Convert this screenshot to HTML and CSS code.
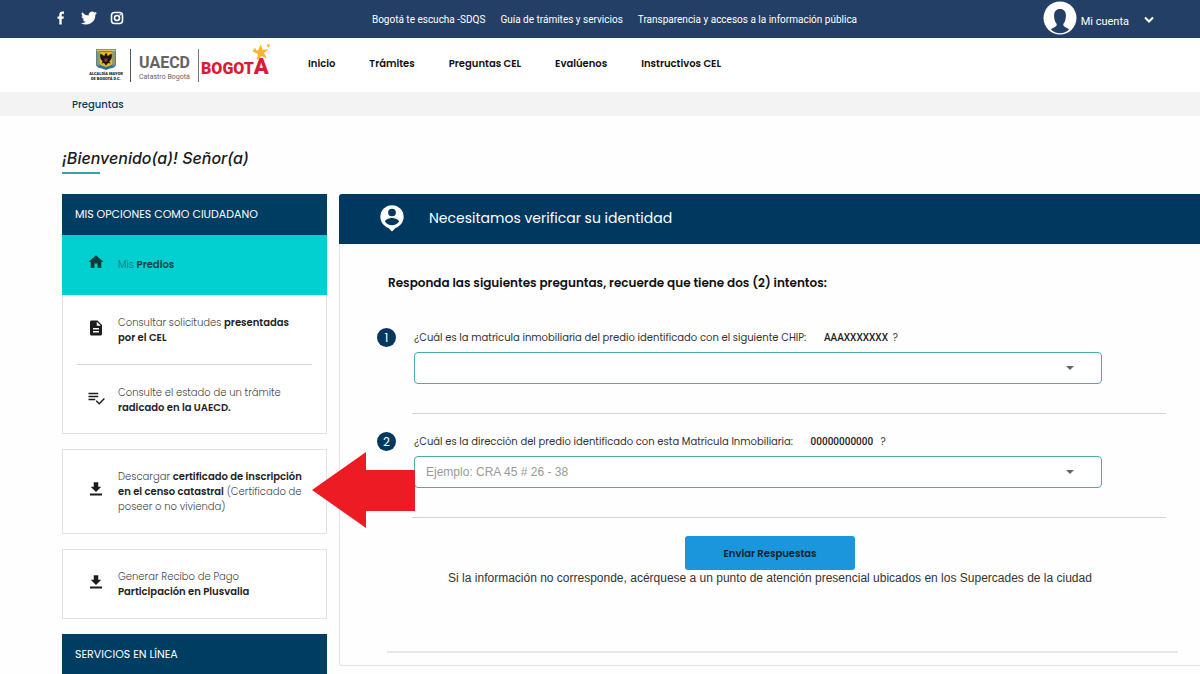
FILE: index.html
```html
<!DOCTYPE html>
<html lang="es">
<head>
<meta charset="utf-8">
<meta name="viewport" content="width=device-width, initial-scale=1">
<title>Catastro en Línea - Preguntas</title>
<link rel="stylesheet" href="styles.css">
</head>
<body>
<header>
  <div class="topbar">
    <div class="social">
      <a href="#" aria-label="Facebook"><svg width="14" height="14" viewBox="0 0 14 14"><path d="M5.3 13.5V7.8H3.5V5.4h1.8V3.8C5.3 1.700 6.500.6 8.400.6c.8 0 1.600.1 1.600.1v2.100H8.900c-.9 0-1.200.5-1.200 1.100v1.500h2.200l-.4 2.400H7.700v5.700z" fill="#fff"/></svg></a>
      <a href="#" aria-label="Twitter"><svg width="16" height="16" viewBox="0 0 24 24"><path d="M23.950 4.600a10 10 0 0 1-2.800.8 5 5 0 0 0 2.100-2.700 10 10 0 0 1-3.100 1.200 4.900 4.900 0 0 0-8.400 4.500A14 14 0 0 1 1.700 3.200a4.900 4.900 0 0 0 1.500 6.500 5 5 0 0 1-2.200-.6 4.900 4.900 0 0 0 3.900 4.900 5 5 0 0 1-2.200.1 4.900 4.900 0 0 0 4.600 3.400A9.900 9.900 0 0 1 0 19.500 14 14 0 0 0 21.500 7.100a10 10 0 0 0 2.450-2.500z" fill="#fff"/></svg></a>
      <a href="#" aria-label="Instagram"><svg width="14" height="14" viewBox="0 0 14 14" fill="none" stroke="#fff" stroke-width="1.600"><rect x="1.500" y="1.500" width="11" height="11" rx="3"/><circle cx="7" cy="7" r="2.500"/><circle cx="10.200" cy="3.800" r=".8" fill="#fff" stroke="none"/></svg></a>
    </div>
    <nav class="toplinks" aria-label="Enlaces institucionales">
      <a href="#">Bogotá te escucha -SDQS</a>
      <a href="#">Guía de trámites y servicios</a>
      <a href="#">Transparencia y accesos a la información pública</a>
    </nav>
    <button class="account" type="button">
      <svg width="34" height="34" viewBox="0 0 34 34"><circle cx="17" cy="17" r="16.500" fill="#fff"/><path d="M17 8c-3.800 0-5.900 2.500-5.900 6.300 0 2.400.3 5 1.300 6.600.6.900 1.300 1.600 1.300 2.800 0 1.900-2.800 2.700-6 4.600 2.500 2.500 5.700 3.900 9.300 3.900s6.800-1.400 9.300-3.900c-3.200-1.900-6-2.700-6-4.600 0-1.200.7-1.900 1.300-2.800 1-1.600 1.300-4.200 1.300-6.600C22.900 10.500 20.800 8 17 8z" fill="#243f65"/></svg>
      <span>Mi cuenta</span>
      <svg class="chevron" width="10" height="8" viewBox="0 0 10 8"><path d="M1 1.500l4 4 4-4" fill="none" stroke="#fff" stroke-width="2"/></svg>
    </button>
  </div>
  <div class="mainbar">
    <a class="brand" href="#">
      <span class="crest">
        <svg width="22" height="23" viewBox="0 0 22 22"><path d="M1 .5h20v15c0 3-3 4-6 4.500l-4 1.500-4-1.500c-3-.5-6-1.500-6-4.500z" fill="#2f6f9d"/><path d="M1.500 2h3v16l-3-2zM17.500 2h3v14l-3 2z" fill="#c9b458" opacity=".6"/><path d="M4.500 3.500h13v11c0 2-3 3-6.500 4-3.500-1-6.500-2-6.500-4z" fill="#e6b62c"/><path d="M1.500 1h19v1.800h-19z" fill="#d8c46a"/><path d="M11 4l1 2 .8 1.500 3.700-2.500c1 3 .2 6-2.200 8l1.200 2-2.500-.6-2 2.600-2-2.600-2.500.6 1.200-2c-2.400-2-3.200-5-2.200-8l3.700 2.500L10 6z" fill="#171717"/><path d="M9.500 10h3v2.500l-1.500 1-1.500-1z" fill="#a73326"/></svg>
        <span>ALCALDÍA MAYOR<br>DE BOGOTÁ D.C.</span>
      </span>
      <span class="agency"><b>UAECD</b><span>Catastro Bogotá</span></span>
      <span class="city"><span>BOGOT<b>A</b></span>
        <svg class="star" width="24" height="21" viewBox="0 0 22 19" fill="#f5b52e"><path d="M11.500 2l1.900 4.900 5.300-.4-4 3.500 2.600 5-4.900-2.200-4.300 3.700 1-5.600L4 8.300l5.400-.9z"/><path d="M4.500 5.500l1.600.8 1.300-1.200-.3 1.700 1.500.8-1.700.3-.3 1.700-.8-1.500-1.700.2L5.300 7zM17 1.500l1.500.8L19.700 1l-.2 1.800 1.500.8-1.700.3-.3 1.600-.8-1.500-1.700.2 1.200-1.200z"/></svg>
      </span>
    </a>
    <nav class="menu" aria-label="Principal">
      <a href="#">Inicio</a><a href="#">Trámites</a><a href="#">Preguntas CEL</a><a href="#">Evalúenos</a><a href="#">Instructivos CEL</a>
    </nav>
  </div>
  <div class="crumbs"><a href="#">Preguntas</a></div>
</header>

<main class="page">
  <h1>¡Bienvenido(a)! Señor(a)</h1>
  <div class="columns">
    <aside class="side">
      <section class="group">
        <h2>MIS OPCIONES COMO CIUDADANO</h2>
        <a class="item active" href="#"><svg width="18" height="18" viewBox="0 0 24 24"><path d="M10 20v-6h4v6h5v-8h3L12 3 2 12h3v8z"/></svg><span>Mis <b>Predios</b></span></a>
        <a class="item" href="#"><svg width="18" height="18" viewBox="0 0 24 24"><path d="M14 2H6c-1.100 0-2 .9-2 2v16c0 1.100.9 2 2 2h12c1.100 0 2-.9 2-2V8zm2 16H8v-2h8zm0-4H8v-2h8zm-3-5V3.500L18.500 9z"/></svg><span>Consultar solicitudes <b>presentadas<br>por el CEL</b></span></a>
        <hr>
        <a class="item" href="#"><svg width="18" height="18" viewBox="0 0 24 24"><path d="M2 5h13v2H2zm0 4h13v2H2zm0 4h9v2H2zM22.500 12l-6.200 6.300L13 15l-1.400 1.400 4.700 4.600 7.600-7.600z"/></svg><span>Consulte el estado de un trámite<br><b>radicado en la UAECD.</b></span></a>
      </section>
      <section class="box">
        <a class="item" href="#"><svg width="18" height="18" viewBox="0 0 24 24"><path d="M19 9h-4V3H9v6H5l7 7zM4 18v2.500h16V18z"/></svg><span>Descargar <b>certificado de inscripción<br>en el censo catastral</b> (Certificado de<br>poseer o no vivienda)</span></a>
        <svg class="pointer" width="104" height="76" viewBox="0 0 104 76"><path d="M0 38L54 0v18h49v41H54v17z" fill="#ed1c24"/></svg>
      </section>
      <section class="box">
        <a class="item" href="#"><svg width="18" height="18" viewBox="0 0 24 24"><path d="M19 9h-4V3H9v6H5l7 7zM4 18v2.500h16V18z"/></svg><span>Generar Recibo de Pago<br><b>Participación en Plusvalia</b></span></a>
      </section>
      <section><h2>SERVICIOS EN LÍNEA</h2></section>
    </aside>

    <form class="card">
      <h2 class="card-head"><svg width="28" height="28" viewBox="0 0 24 24"><path d="M12 1a10 10 0 0 0-10 10c0 4.500 3 8.300 7 9.500L12 23.500l3-3c4-1.200 7-5 7-9.500A10 10 0 0 0 12 1zm0 3a3.300 3.300 0 1 1 0 6.600A3.300 3.300 0 0 1 12 4zm0 14.300a7.200 7.200 0 0 1-6-3.200c0-2 4-3.100 6-3.100s6 1.100 6 3.100a7.200 7.200 0 0 1-6 3.200z" fill="#fff"/></svg>Necesitamos verificar su identidad</h2>
      <div class="card-body">
        <h3>Responda las siguientes preguntas, recuerde que tiene dos (2) intentos:</h3>
        <div class="question">
          <span class="num">1</span>
          <div class="field">
            <label for="q1">¿Cuál es la matrícula inmobiliaria del predio identificado con el siguiente CHIP: <b>AAAXXXXXXX</b> ?</label>
            <div class="select"><select id="q1"><option></option></select><svg width="8" height="4" viewBox="0 0 8 4"><path d="M0 0h8L4 4z" fill="#666"/></svg></div>
          </div>
        </div>
        <div class="question">
          <span class="num">2</span>
          <div class="field">
            <label for="q2">¿Cuál es la dirección del predio identificado con esta Matrícula Inmobiliaria: <b>00000000000</b> &nbsp;?</label>
            <div class="select"><select id="q2"><option>Ejemplo: CRA 45 # 26 - 38</option></select><svg width="8" height="4" viewBox="0 0 8 4"><path d="M0 0h8L4 4z" fill="#666"/></svg></div>
          </div>
        </div>
        <div class="actions">
          <button type="submit">Enviar Respuestas</button>
          <p>Si la información no corresponde, acérquese a un punto de atención presencial ubicados en los Supercades de la ciudad</p>
        </div>
      </div>
    </form>
  </div>
</main>
</body>
</html>
```
FILE: styles.css
```css
* { box-sizing: border-box; }
body {
  margin: 0;
  background: #fefefe;
  color: #222;
  font-family: Poppins, Inter, "Open Sans", sans-serif;
  font-size: 10px;
  line-height: 15px;
  overflow-x: hidden;
}
a { color: inherit; text-decoration: none; }
button { font: inherit; border: 0; cursor: pointer; }
svg { display: block; flex: none; }
h1, h2, h3, p { margin: 0; font-weight: 400; }

.topbar {
  display: grid;
  grid-template-columns: 1fr auto 1fr;
  align-items: center;
  height: 38px;
  padding: 0 46px 2px 54px;
  background: #243f65;
  color: #fff;
  font-family: Roboto, "Liberation Sans", sans-serif;
}
.social { display: flex; align-items: center; gap: 13px; }
.toplinks { display: flex; gap: 15px; margin-left: 21px; padding-top: 2px; }
.account {
  display: flex;
  align-items: center;
  justify-self: end;
  gap: 4px;
  padding: 0;
  background: none;
  color: #fff;
  font-size: 11px;
}
.account span { padding-top: 6px; }
.chevron { margin-left: 11px; margin-top: 4px; }

.mainbar {
  display: flex;
  align-items: center;
  gap: 35px;
  height: 54px;
  padding-left: 89px;
  background: #fff;
}
.brand { display: flex; align-items: center; }
.crest {
  display: flex;
  flex-direction: column;
  align-items: center;
  width: 34px;
  padding-bottom: 2px;
  color: #222;
  font: 900 4px/5px Roboto, sans-serif;
  text-align: center;
  white-space: nowrap;
}
.agency {
  display: flex;
  flex-direction: column;
  margin-left: 7px;
  padding: 5px 7px 0 8px;
  width: 69px;
  height: 33px;
  border-left: 1px solid #555;
  border-right: 1px solid #777;
  color: #646464;
  font-family: Roboto, "Open Sans", sans-serif;
  font-size: 7px;
  line-height: 10px;
  white-space: nowrap;
}
.agency b { font-size: 16px; line-height: 18px; }
.city {
  position: relative;
  width: 74px;
  padding: 6px 0 0 2px;
  color: #d91c36;
  font: 900 16px/20px Roboto, sans-serif;
  white-space: nowrap;
}
.city b { font-size: 22px; font-weight: 900; }
.star { position: absolute; right: 1px; top: -9px; }
.menu { display: flex; gap: 34px; color: #111; font-weight: 600; padding-bottom: 4px; }

.crumbs {
  height: 24px;
  padding: 6px 72px;
  background: #f3f3f3;
  color: #003d63;
  line-height: 14px;
  font-weight: 500;
}

.page { padding-left: 62px; }
h1 {
  margin: 30px 0 20px;
  color: #1a1a1a;
  font: italic 500 16px/24px Inter, sans-serif;
}
h1::after {
  content: "";
  display: block;
  width: 38px;
  height: 2px;
  margin-top: 2px;
  background: #35a5a8;
}
.columns { display: flex; align-items: flex-start; gap: 12px; }

.side { display: flex; flex-direction: column; gap: 15px; flex: 0 0 265px; }
.side h2 {
  padding: 10px 13px 11px;
  background: #003d63;
  color: #fff;
  font-size: 11px;
  line-height: 20px;
}
.group, .box { border: 1px solid #e2e2e2; background: #fff; }
.group { border-top: 0; }
.group h2 { margin: 0 -1px; }
.group hr { height: 1px; margin: 0 14px; border: 0; background: #d8d8d8; }
.box { position: relative; }
.item {
  display: flex;
  align-items: center;
  gap: 13px;
  padding: 19px 0 19px 24px;
  color: #444;
  font-weight: 300;
  white-space: nowrap;
}
.item svg { margin-bottom: 5px; fill: #1c1c1c; }
.item b { color: #222; font-weight: 600; }
.group .item { padding: 20px 0 19px 24px; }
.group .item.active {
  height: 60px;
  margin: 0 -1px;
  padding: 0 0 2px 25px;
  background: #02cfcf;
  color: #14706f;
}
.active b { color: #0b4446; }
.item.active svg { fill: #0d3b3c; }
.group .item:last-child { padding-bottom: 18px; }
.pointer { position: absolute; left: 249px; top: 2px; z-index: 2; }

.card {
  flex: 1;
  min-width: 0;
  border: solid #e4e4e4;
  border-width: 0 0 1px 1px;
  border-radius: 3px 0 0 3px;
  background: #fefefe;
}
.card-head {
  display: flex;
  align-items: center;
  gap: 23px;
  height: 50px;
  padding: 0 39px 2px;
  margin-left: -1px;
  border-radius: 3px 0 0;
  background: #003860;
  color: #fff;
  font-size: 14px;
  line-height: 24px;
}
.card-body { padding: 29px 22px 12px 37px; }
h3 {
  margin: 0 0 17px 11px;
  color: #111;
  font-size: 12px;
  line-height: 20px;
  font-weight: 600;
}
.question { display: flex; gap: 16px; padding-top: 15px; }
.num {
  flex: none;
  width: 19px;
  height: 19px;
  margin-top: 3px;
  border-radius: 50%;
  background: #003860;
  color: #fff;
  font-size: 12px;
  line-height: 19px;
  text-align: center;
}
.field {
  flex: 1;
  margin-right: 12px;
  padding: 0 64px 29px 2px;
  border-bottom: 1px solid #d4d4d4;
}
.field label { display: block; color: #333; line-height: 24px; padding-top: 1px; margin-bottom: 2px; }
.field label b {
  margin: 0 2px 0 15px;
  color: #222;
  font: 500 10px/20px Roboto, sans-serif;
}
.select { position: relative; }
.select select {
  display: block;
  width: 100%;
  height: 32px;
  padding: 0 11px;
  appearance: none;
  border: 1px solid #4fa9ae;
  border-radius: 4px;
  background: #fff;
  color: #999;
  font: 12px "Liberation Sans", sans-serif;
}
.select svg { position: absolute; right: 28px; top: 14px; pointer-events: none; }
.actions {
  display: flex;
  flex-direction: column;
  align-items: center;
  margin-left: 10px;
  padding: 18px 25px 64px 0;
  border-bottom: 2px solid #e6e6e6;
}
.actions button {
  width: 170px;
  height: 34px;
  border-radius: 3px;
  background: #1b96dc;
  color: #0d1f2e;
  font-weight: 600;
}
.actions p {
  color: #333;
  font: 12px/17px "Liberation Sans", sans-serif;
}
```
